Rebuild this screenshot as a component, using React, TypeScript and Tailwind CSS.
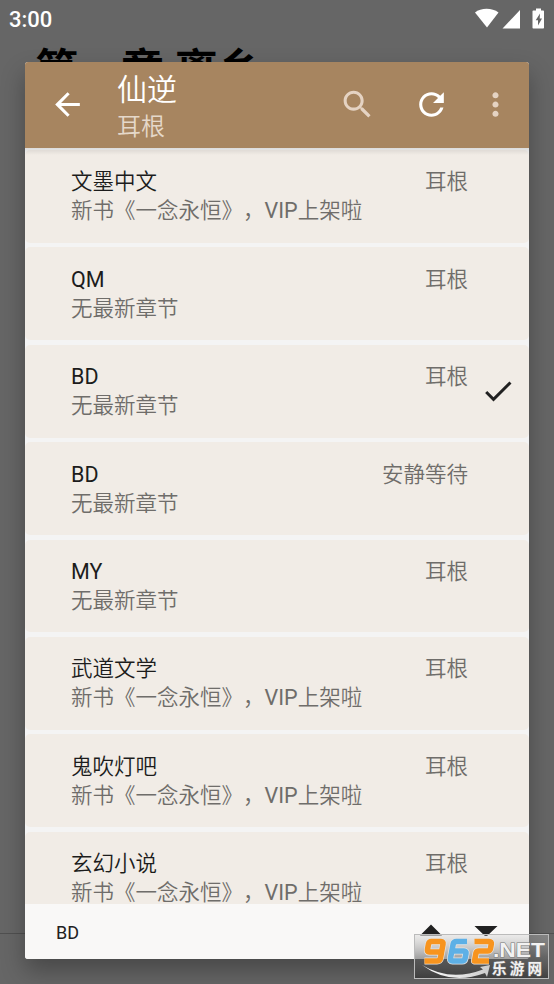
import React from "react";

type Source = {
  name: string;
  author: string;
  latest: string;
  selected?: boolean;
};

const NEW_BOOK = "新书《一念永恒》，VIP上架啦";
const NO_CHAPTER = "无最新章节";

const sources: Source[] = [
  { name: "文墨中文", author: "耳根", latest: NEW_BOOK },
  { name: "QM", author: "耳根", latest: NO_CHAPTER },
  { name: "BD", author: "耳根", latest: NO_CHAPTER, selected: true },
  { name: "BD", author: "安静等待", latest: NO_CHAPTER },
  { name: "MY", author: "耳根", latest: NO_CHAPTER },
  { name: "武道文学", author: "耳根", latest: NEW_BOOK },
  { name: "鬼吹灯吧", author: "耳根", latest: NEW_BOOK },
  { name: "玄幻小说", author: "耳根", latest: NEW_BOOK },
];

type IconProps = {
  d: string;
  className?: string;
};

const Icon: React.FC<IconProps> = ({ d, className }) => (
  <svg viewBox="0 0 24 24" fill="currentColor" className={className}>
    <path d={d} />
  </svg>
);

// Latin runs keep the regular weight, Chinese runs are set lighter
const Mixed: React.FC<{ text: string }> = ({ text }) => (
  <span className="font-[350] [text-spacing-trim:space-all]">
    {text.split(/([A-Z]+)/).map((part, i) =>
      i % 2 ? (
        <span key={i} className="font-normal">
          {part}
        </span>
      ) : (
        part
      )
    )}
  </span>
);

const StatusBar: React.FC = () => (
  <div className="flex h-[39px] items-center justify-between pl-[9px] pr-[9px] text-white">
    <span className="text-[22px] leading-[39px] font-medium">3:00</span>
    <svg viewBox="0 0 70 22" className="-mt-px h-[22px] w-[70px]" fill="#fff">
      <path d="M0 4.500C6-.5 17-.5 23.500 4.500L12 19.500Z" />
      <path d="M27.500 20.500H45V2Z" />
      <path
        fillRule="evenodd"
        d="M61 .5h5v2h2.200q.8 0 .8.8v16.400q0 .8-.8.8h-9.900q-.8 0-.8-.8V3.300q0-.8.8-.8H61ZM65 5.500l-4.300 6.800h2.300V17.500l4-7h-2.300Z"
      />
    </svg>
  </div>
);

const Toolbar: React.FC = () => (
  <div className="flex h-[86px] shrink-0 items-center bg-[#a78560] pl-[24px] text-white">
    <Icon
      className="-mt-px h-[37px] w-[37px]"
      d="M20 11H7.830l5.590-5.590L12 4l-8 8 8 8 1.410-1.410L7.830 13H20v-2z"
    />
    <div className="ml-[31px] grow pt-[4px] font-[350]">
      <div className="h-[38px] text-[30px] leading-[38px]">仙逆</div>
      <div className="h-[34px] pt-px text-[24px] leading-[34px] text-[#e5d8ca]">
        耳根
      </div>
    </div>
    <Icon
      className="-mt-px h-[37px] w-[37px] text-[#e5d3c3]"
      d="M15.500 14h-.79l-.28-.27C15.410 12.590 16 11.110 16 9.500 16 5.910 13.090 3 9.500 3S3 5.910 3 9.500 5.910 16 9.500 16c1.610 0 3.090-.59 4.230-1.570l.27.28v.79l5 4.990L20.490 19l-4.990-5zm-6 0C7.010 14 5 11.990 5 9.500S7.010 5 9.500 5 14 7.010 14 9.500 11.990 14 9.500 14z"
    />
    <Icon
      className="-mt-px ml-[37px] h-[37px] w-[37px]"
      d="M17.650 6.350C16.200 4.900 14.210 4 12 4c-4.420 0-7.990 3.580-7.990 8s3.570 8 7.990 8c3.730 0 6.840-2.550 7.730-6h-2.080c-.82 2.330-3.040 4-5.650 4-3.310 0-6-2.690-6-6s2.690-6 6-6c1.660 0 3.140.69 4.220 1.780L13 11h7V4l-2.350 2.350z"
    />
    <Icon
      className="-mt-px ml-[27px] mr-[15px] h-[37px] w-[37px] text-[#e5d3c3]"
      d="M12 8c1.100 0 2-.9 2-2s-.9-2-2-2-2 .9-2 2 .9 2 2 2zm0 2c-1.100 0-2 .9-2 2s.9 2 2 2 2-.9 2-2-.9-2-2-2zm0 6c-1.100 0-2 .9-2 2s.9 2 2 2 2-.9 2-2-.9-2-2-2z"
    />
  </div>
);

const SourceRow: React.FC<Source> = ({ name, author, latest, selected }) => (
  <div className="flex h-[92.8px] shrink-0 rounded-[5px] bg-[#f1ece6] pl-[46px] text-[21.5px] leading-[29px]">
    <div className="grow pt-[17.400px]">
      <div className="flex justify-between text-[#6f6d6a]">
        <span className="text-[#1c1c1c]">
          <Mixed text={name} />
        </span>
        <Mixed text={author} />
      </div>
      <div className="text-[#6f6d6a]">
        <Mixed text={latest} />
      </div>
    </div>
    <div className="flex w-[61px] items-center justify-center pr-px">
      {selected && (
        <Icon
          className="h-9 w-9 text-[#212121]"
          d="M9 16.170L4.830 12l-1.420 1.410L9 19 21 7l-1.410-1.410z"
        />
      )}
    </div>
  </div>
);

const Watermark: React.FC = () => (
  <svg
    viewBox="0 0 135 45"
    className="absolute left-[414px] top-[934px] h-[45px] w-[135px]"
  >
    <defs>
      <linearGradient id="plate" x1="0" y1="0" x2="0" y2="1">
        <stop offset="0" stopColor="#ccc" stopOpacity=".3" />
        <stop offset=".5" stopColor="#666" stopOpacity=".55" />
        <stop offset="1" stopColor="#333" stopOpacity=".75" />
      </linearGradient>
      <linearGradient id="swoosh" x1="0" y1="0" x2="1" y2="0">
        <stop offset="0" stopColor="#fff" />
        <stop offset="1" stopColor="#ccc" />
      </linearGradient>
    </defs>
    <rect x=".5" y=".5" width="134" height="44" fill="url(#plate)" stroke="#bbb" />
    <path d="M8 31Q36 48 69 35.500L66 33L76 31L73 43L71 39Q36 52 8 31Z" fill="url(#swoosh)" />
    <g fill="none" strokeLinejoin="round" transform="translate(7.500 4)">
      {["#e4e4e4", ""].map((halo, i) => (
        <g key={i} strokeWidth={halo ? 7 : 5.6}>
          <path
            stroke={halo || "#f7941e"}
            d="M19 14H7.500Q5.500 14 6 11.500L7 6Q7.500 3.500 10 3.500H19.500Q22 3.500 21.500 6L19 20Q18.300 23 15.500 23H3"
          />
          <path
            stroke={halo || "#5db0e6"}
            d="M45.500 3.500H35Q32.300 3.500 31.700 6L29 20Q28.500 23 31 23H40.500Q43 23 43.500 20.500L44.500 15.500Q45 13 42.500 13H31"
          />
          <path
            stroke={halo || "#f7941e"}
            d="M53 3.500H67.500Q70.300 3.500 69.800 6L69 10.500Q68.500 13 66 13H57.500Q55 13 54.500 15L53 23H67.500"
          />
        </g>
      ))}
    </g>
    <g
      className="font-['Liberation_Sans','Noto_Sans_CJK_SC',sans-serif]"
      fill="#f2f2f2"
      stroke="#777"
      strokeWidth="1"
      fontWeight="bold"
      paintOrder="stroke"
    >
      <text x="79" y="22.500" fontSize="19.500" textLength="52" lengthAdjust="spacingAndGlyphs">
        .NET
      </text>
      <text x="78" y="40" fontSize="14.500" textLength="50">
        乐游网
      </text>
    </g>
  </svg>
);

const App: React.FC = () => {
  return (
    <div className="relative h-[984px] w-[554px] overflow-hidden bg-[#666] font-['Roboto','Noto_Sans_CJK_SC',sans-serif]">
      <StatusBar />
      <h1 className="h-[60px] pl-[35px] pt-px text-[43px] leading-[60px] font-bold whitespace-pre text-black">
        第一章 离乡
      </h1>
      <div className="mt-[834px] border-t border-[#505050]" />
      {/* source picker dialog */}
      <div className="absolute left-[25px] top-[62px] flex h-[897px] w-[504px] flex-col overflow-hidden rounded-[3px] bg-[#f4f4f4] shadow-[0_12px_24px_rgba(0,0,0,0.3)]">
        <Toolbar />
        <div className="relative flex min-h-0 grow flex-col gap-[4.6px] overflow-hidden pt-[2px]">
          <div className="absolute inset-x-0 top-0 h-[7px] bg-linear-to-b from-black/10 to-transparent" />
          {sources.map((source, i) => (
            <SourceRow key={i} {...source} />
          ))}
        </div>
        <div className="flex h-[55px] shrink-0 items-center justify-between bg-[#f9f8f7] pl-[31px] pr-[31px] pt-px text-[18px] text-[#212121]">
          <span>BD</span>
          <svg viewBox="0 0 80 12" className="-mt-1 h-3 w-20" fill="#212121">
            <path d="M2 11.500L13 0.500L24 11.500ZM56.500 2H79.500L68 13Z" />
          </svg>
        </div>
      </div>
      <Watermark />
    </div>
  );
};

export default App;
